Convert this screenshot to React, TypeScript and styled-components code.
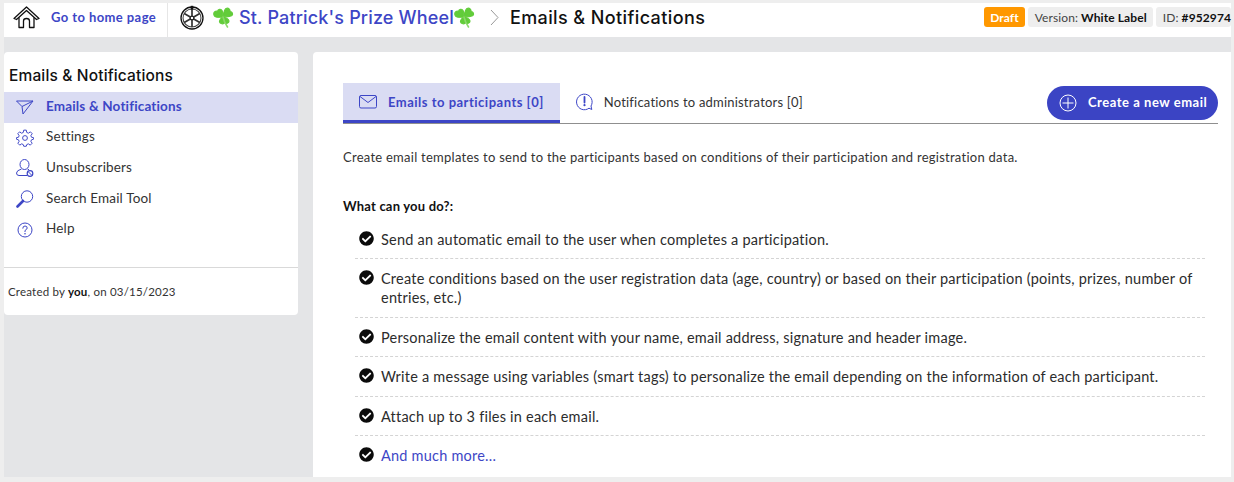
import React from "react";
import styled, { createGlobalStyle } from "styled-components";
import { FaCheckCircle } from "react-icons/fa";

const Global = createGlobalStyle`
  html, body { margin: 0; padding: 0; height: 482px; overflow: hidden; background: #eeeeee; }
  * { box-sizing: border-box; }
  body { font-family: "Lato", "Noto Sans", sans-serif; color: #1f1f1f; }
`;

const Frame = styled.div`
  height: 482px;
  padding: 3px 3px 5px 4px;
  display: flex;
  flex-direction: column;
  background: #eeeeee;
  overflow: hidden;
`;
const TopBar = styled.header`
  flex: 0 0 34px;
  background: #fff;
  display: flex;
  align-items: center;
`;
const HomeLink = styled.a`
  width: 164px;
  height: 100%;
  display: flex;
  align-items: center;
  border-right: 1px solid #e6e6e6;
  padding: 0 0 6px 9px;
  gap: 11px;
  color: #3d46c6;
  font-size: 13px;
  font-weight: 700;
  letter-spacing: 0.42px;
`;
const Crumbs = styled.div`
  flex: 1;
  display: flex;
  align-items: center;
  padding: 0 0 6px 12px;
`;
const ProjectTitle = styled.span`
  display: flex;
  align-items: center;
  margin-left: 9px;
  font-family: "Inter", sans-serif;
  font-size: 18px;
  font-weight: 500;
  color: #3d46c6;
  letter-spacing: 0.16px;
`;
const Chevron = styled.svg`
  margin: 0 11px 0 15px;
`;
const PageTitle = styled.span`
  font-family: "Inter", sans-serif;
  font-size: 18px;
  font-weight: 500;
  color: #111;
  letter-spacing: 0.4px;
`;
const Badges = styled.div`
  display: flex;
  align-items: center;
  gap: 3px;
  height: 20px;
  font-size: 12px;
  letter-spacing: 0.1px;
  margin-top: -6px;
`;
const Badge = styled.span<{ $draft?: boolean; $last?: boolean }>`
  height: 20px;
  display: flex;
  align-items: center;
  padding: 0 ${(p) => (p.$last ? 0 : 6)}px 0 ${(p) => (p.$draft ? 6 : 7)}px;
  white-space: nowrap;
  border-radius: 3px;
  background: ${(p) => (p.$draft ? "#ff9800" : "#eeeeee")};
  color: ${(p) => (p.$draft ? "#fff" : "#444")};
  font-weight: ${(p) => (p.$draft ? 700 : 400)};
  b { color: #111; font-weight: 700; margin-left: 3px; }
`;
const Body = styled.div`
  flex: 1;
  min-height: 0;
  background: #e4e5e7;
  padding-top: 15px;
  display: flex;
  gap: 15px;
  align-items: flex-start;
`;
const Sidebar = styled.aside`
  width: 294px;
  height: 263px;
  background: #fff;
  border-radius: 4px;
  display: flex;
  flex-direction: column;
`;
const SideTitle = styled.h2`
  margin: 0;
  padding: 15px 0 0 5px;
  height: 40px;
  font-family: "Inter", sans-serif;
  font-size: 15.5px;
  line-height: 18px;
  font-weight: 500;
  letter-spacing: 0.15px;
  color: #111;
`;
const Nav = styled.nav`
  display: flex;
  flex-direction: column;
`;
const NavItem = styled.a<{ $active?: boolean }>`
  height: 30.6px;
  display: flex;
  align-items: center;
  gap: 12px;
  padding-left: 12px;
  svg { flex: 0 0 auto; }
  span { position: relative; top: -1.5px; }
  font-size: 13.5px;
  letter-spacing: 0.16px;
  background: ${(p) => (p.$active ? "#dadcf3" : "transparent")};
  color: ${(p) => (p.$active ? "#3d46c6" : "#333")};
  font-weight: ${(p) => (p.$active ? 700 : 400)};
`;
const SideFooter = styled.div`
  margin-top: 22px;
  border-top: 1px solid #d9d9d9;
  padding: 16px 0 0 4px;
  font-size: 11.5px;
  line-height: 16px;
  letter-spacing: 0.2px;
  color: #333;
  b { font-weight: 700; color: #111; }
`;
const Main = styled.main`
  flex: 1;
  align-self: stretch;
  background: #fff;
  border-radius: 4px 0 0 0;
  padding: 31px 13px 0 30px;
  overflow: hidden;
`;
const TabRow = styled.div`
  height: 41px;
  display: flex;
  align-items: flex-start;
  border-bottom: 1px solid #8f8f8f;
`;
const Tab = styled.a<{ $active?: boolean }>`
  height: 40px;
  display: flex;
  align-items: center;
  gap: 11px;
  padding: 0 16px ${(p) => (p.$active ? 0 : 3)}px 16px;
  font-size: 13px;
  letter-spacing: ${(p) => (p.$active ? 0.5 : 0.2)}px;
  white-space: nowrap;
  color: ${(p) => (p.$active ? "#3d46c6" : "#333")};
  font-weight: ${(p) => (p.$active ? 700 : 400)};
  background: ${(p) => (p.$active ? "#dadcf3" : "transparent")};
  border-bottom: ${(p) => (p.$active ? "3px solid #3d46c6" : "none")};
`;
const CreateButton = styled.button`
  margin-left: auto;
  margin-top: 3px;
  width: 171px;
  height: 34px;
  border: 0;
  border-radius: 17px;
  background: #3b44c4;
  color: #fff;
  font-family: inherit;
  font-size: 13px;
  font-weight: 700;
  letter-spacing: 0.53px;
  display: flex;
  align-items: center;
  gap: 11px;
  padding: 0 0 0 12px;
  span { position: relative; top: -1px; }
`;
const Intro = styled.p`
  margin: 25px 0 0;
  font-size: 13px;
  line-height: 16px;
  letter-spacing: 0.26px;
  color: #333;
`;
const Subhead = styled.h3`
  margin: 33px 0 0;
  font-size: 13px;
  line-height: 16px;
  font-weight: 700;
  color: #111;
  letter-spacing: 0.2px;
`;
const List = styled.ul`
  list-style: none;
  margin: 5.5px 13px 0 12px;
  padding: 0;
`;
const Item = styled.li`
  display: flex;
  gap: 7px;
  padding: 10px 0 9.6px 4px;
  border-bottom: 1px dashed #d4d4d4;
  font-size: 14.5px;
  line-height: 19px;
  letter-spacing: 0.22px;
  color: #2c2c2c;
  &:last-child { border-bottom: 0; }
  svg { flex: 0 0 15px; margin-top: 1px; color: #0b0b0b; }
  a { color: #3d46c6; }
`;

const B = "#3d46c6";

const House = () => (
  <svg width="27" height="23" viewBox="0 0 27 23" fill="none" stroke="#111" strokeWidth="1.3" strokeLinejoin="round" strokeLinecap="round">
    <path d="M1 12.5 L13.5 1 L26 12.5 L23.5 13.5 L13.5 4.5 L3.5 13.5 Z" />
    <path d="M6 12 V21.5 H10.5 V15 Q10.5 12.5 13.5 12.5 Q16.5 12.5 16.5 15 V21.5 H21 V12" />
  </svg>
);
const Wheel = () => (
  <svg width="24" height="25" viewBox="0 0 24 25" fill="none" stroke="#111">
    <circle cx="12" cy="13" r="11" strokeWidth="1.3" />
    <circle cx="12" cy="13" r="9" strokeWidth="1.1" stroke="#444" />
    <circle cx="12" cy="13" r="1.9" strokeWidth="1.2" />
    <path d="M12 4 V11 M12 15 V22 M4.2 8.5 L10.3 12 M13.7 14 L19.8 17.5 M4.2 17.5 L10.3 14 M13.7 12 L19.8 8.5" strokeWidth="1.7" stroke="#333" />
    <path d="M12 .8 V4.5" strokeWidth="2.6" />
  </svg>
);
const Shamrock = ({ trailing }: { trailing?: boolean }) => (
  <svg width="21" height="21" viewBox="0 0 21 21" style={{ margin: trailing ? "0" : "0 5px 0 0" }}>
    <g fill="#62cc3a" stroke="#62cc3a" strokeWidth="1.2" strokeLinejoin="round">
      <path d="M9.5 10 C6 10.5 2 11 1 8 C0 5 3 3.5 4.5 4.5 C5 2 8 1.5 9 3.5 C10 5.5 10 8 9.5 10 Z" />
      <path d="M10 9.5 C10.5 7 11 3 13 1.5 C15.5 0.5 17.5 2.5 17 4.5 C19.5 4.5 20.5 7.5 18.5 8.8 C16 10 12.5 10 10 9.5 Z" />
      <path d="M10 10 C12 10.5 15.5 11.5 16 14 C16 16.5 13 17 11.5 15.8 C10.5 17.5 7 17 6.5 14.8 C6.5 12.5 8.5 11 10 10 Z" />
    </g>
    <path d="M10 10 Q11 15 14.5 20" stroke="#8bd96a" strokeWidth="1.6" fill="none" strokeLinecap="round" />
  </svg>
);
const Mail = () => (
  <svg width="18" height="14" viewBox="0 0 18 14" fill="none" stroke={B} strokeWidth="1">
    <rect x=".5" y=".5" width="17" height="12.5" rx="1.5" />
    <path d="M1 1.5 L9 7.5 L17 1.5" />
  </svg>
);
const Alert = () => (
  <svg width="17" height="18" viewBox="0 0 17 18" fill="none" stroke={B} strokeWidth="1">
    <path d="M13 15.2 A7.8 7.8 0 1 1 15 13 L15.8 16.5 Z" strokeLinejoin="round" />
    <path d="M8.5 4 V9.5" strokeWidth="1.8" strokeLinecap="round" />
    <circle cx="8.5" cy="12.2" r="1.1" fill={B} stroke="none" />
  </svg>
);
const Plus = () => (
  <svg width="18" height="18" viewBox="0 0 18 18" fill="none" stroke="#fff" strokeWidth="1">
    <circle cx="9" cy="9" r="8" />
    <path d="M9 3.5 V14.5 M3.5 9 H14.5" />
  </svg>
);
const Send = () => (
  <svg width="18" height="15" viewBox="0 0 18 15" fill="none" stroke={B} strokeWidth="1" strokeLinejoin="round">
    <path d="M.5 1 H17 L7 14 L6 6.5 Z M6 6.5 L17 1" />
  </svg>
);
const Gear = () => (
  <svg width="18" height="18" viewBox="0 0 24 24" fill="none" stroke={B} strokeWidth="1.3" strokeLinejoin="round">
    <circle cx="12" cy="12" r="3.2" />
    <path d="M10.3 1.5 H13.7 L14.3 4.6 L16.6 5.6 L19.2 3.8 L21.6 6.2 L19.8 8.9 L20.7 11 L23.5 11.6 V13.5 L20.7 14.4 L19.8 16.4 L21.5 19 L19 21.5 L16.5 19.8 L14.4 20.7 L13.7 23 H10.3 L9.6 20.7 L7.5 19.8 L5 21.5 L2.5 19 L4.2 16.4 L3.3 14.4 L.5 13.5 V11.6 L3.3 11 L4.2 8.9 L2.4 6.2 L4.8 3.8 L7.4 5.6 L9.7 4.6 Z" />
  </svg>
);
const UserBlock = () => (
  <svg width="18" height="18" viewBox="0 0 18 18" fill="none" stroke={B} strokeWidth="1">
    <ellipse cx="8.5" cy="5.5" rx="4.5" ry="5" />
    <path d="M11 16.5 H3 Q.5 16.5 .5 14 Q.5 11.5 5.5 10 M11.5 10 L13 10.8" />
    <circle cx="14" cy="14.5" r="2.8" strokeWidth="1.2" />
    <path d="M12 12.5 L16 16.5" />
  </svg>
);
const Search = () => (
  <svg width="18" height="18" viewBox="0 0 18 18" fill="none" stroke={B}>
    <circle cx="11" cy="6.5" r="5.7" strokeWidth="1" />
    <path d="M7 11 L1.5 16.5" strokeWidth="2.6" strokeLinecap="round" />
  </svg>
);
const HelpIcon = () => (
  <svg width="18" height="18" viewBox="0 0 18 18" fill="none" stroke={B} strokeWidth="1">
    <circle cx="9" cy="9" r="7" />
    <path d="M6.8 7.2 Q6.8 5 9 5 Q11.2 5 11.2 7 Q11.2 8.2 9 9.5 V10.6" strokeLinecap="round" />
    <circle cx="9" cy="12.8" r=".8" fill={B} stroke="none" />
  </svg>
);

const items: React.ReactNode[] = [
  "Send an automatic email to the user when completes a participation.",
  "Create conditions based on the user registration data (age, country) or based on their participation (points, prizes, number of entries, etc.)",
  "Personalize the email content with your name, email address, signature and header image.",
  "Write a message using variables (smart tags) to personalize the email depending on the information of each participant.",
  "Attach up to 3 files in each email.",
  <a key="more">And much more...</a>,
];

export default function App() {
  return (
    <>
      <Global />
      <Frame>
        <TopBar>
          <HomeLink>
            <House />
            <span>Go to home page</span>
          </HomeLink>
          <Crumbs>
            <Wheel />
            <ProjectTitle>
              <Shamrock />St. Patrick's Prize Wheel<Shamrock trailing />
            </ProjectTitle>
            <Chevron width="9" height="17" viewBox="0 0 9 17" fill="none" stroke="#999" strokeWidth="1">
              <path d="M1 1 L8 8.5 L1 16" />
            </Chevron>
            <PageTitle>Emails &amp; Notifications</PageTitle>
          </Crumbs>
          <Badges>
            <Badge $draft>Draft</Badge>
            <Badge>Version:<b>White Label</b></Badge>
            <Badge $last>ID:<b>#952974</b></Badge>
          </Badges>
        </TopBar>
        <Body>
          <Sidebar>
            <SideTitle>Emails &amp; Notifications</SideTitle>
            <Nav>
              <NavItem $active><Send /><span>Emails &amp; Notifications</span></NavItem>
              <NavItem><Gear /><span>Settings</span></NavItem>
              <NavItem><UserBlock /><span>Unsubscribers</span></NavItem>
              <NavItem><Search /><span>Search Email Tool</span></NavItem>
              <NavItem><HelpIcon /><span>Help</span></NavItem>
            </Nav>
            <SideFooter>Created by <b>you</b>, on 03/15/2023</SideFooter>
          </Sidebar>
          <Main>
            <TabRow>
              <Tab $active><Mail /><span>Emails to participants [0]</span></Tab>
              <Tab><Alert /><span>Notifications to administrators [0]</span></Tab>
              <CreateButton><Plus /><span>Create a new email</span></CreateButton>
            </TabRow>
            <Intro>Create email templates to send to the participants based on conditions of their participation and registration data.</Intro>
            <Subhead>What can you do?:</Subhead>
            <List>
              {items.map((t, i) => (
                <Item key={i}>
                  <FaCheckCircle size={15} />
                  <span>{t}</span>
                </Item>
              ))}
            </List>
          </Main>
        </Body>
      </Frame>
    </>
  );
}
